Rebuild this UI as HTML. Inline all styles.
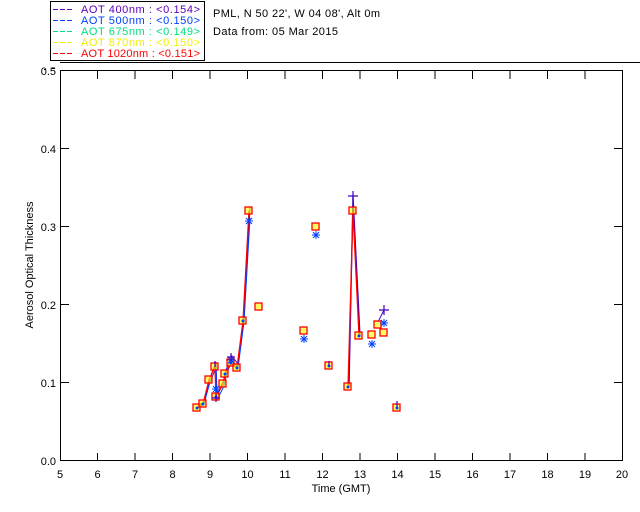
<!DOCTYPE html>
<html><head><meta charset="utf-8"><style>
html,body{margin:0;padding:0;background:#fff;}
svg{display:block;}
text{font-family:"Liberation Sans","DejaVu Sans",sans-serif;font-size:11px;}
</style></head><body>
<svg width="640" height="512" viewBox="0 0 640 512" xmlns="http://www.w3.org/2000/svg">
<rect width="640" height="512" fill="#fff"/>
<!-- legend -->
<rect x="50.5" y="1.5" width="154" height="59" fill="none" stroke="#000"/>
<g stroke-width="1" stroke-dasharray="5,2">
<line x1="53" y1="9.5" x2="73" y2="9.5" stroke="#6000c0"/>
<line x1="53" y1="20.5" x2="73" y2="20.5" stroke="#0040ff"/>
<line x1="53" y1="31.5" x2="73" y2="31.5" stroke="#00e080"/>
<line x1="53" y1="42.5" x2="73" y2="42.5" stroke="#f0f000"/>
<line x1="53" y1="53.5" x2="73" y2="53.5" stroke="#ff0000"/>
</g>
<g font-size="11">
<text x="81" y="13" fill="#6000c0" textLength="119">AOT  400nm : &lt;0.154&gt;</text>
<text x="81" y="24" fill="#0040ff" textLength="119">AOT  500nm : &lt;0.150&gt;</text>
<text x="81" y="35" fill="#00e080" textLength="119">AOT  675nm : &lt;0.149&gt;</text>
<text x="81" y="46" fill="#f0f000" textLength="119">AOT  870nm : &lt;0.150&gt;</text>
<text x="81" y="57" fill="#ff0000" textLength="119">AOT 1020nm : &lt;0.151&gt;</text>
<text x="213" y="17" fill="#000" textLength="167">PML, N 50 22', W 04 08', Alt 0m</text>
<text x="213" y="35" fill="#000" textLength="125">Data from: 05 Mar 2015</text>
</g>
<line x1="60" y1="62.5" x2="640" y2="62.5" stroke="#000"/>
<line x1="44" y1="69.5" x2="46" y2="69.5" stroke="#000"/><line x1="52" y1="68.5" x2="55" y2="68.5" stroke="#000"/>
<!-- axes -->
<rect x="60.5" y="70.5" width="562" height="390" fill="none" stroke="#000"/>
<g stroke="#000">
<line x1="97.5" y1="461" x2="97.5" y2="453"/><line x1="135" y1="461" x2="135" y2="453"/><line x1="172.5" y1="461" x2="172.5" y2="453"/><line x1="210" y1="461" x2="210" y2="453"/><line x1="247.5" y1="461" x2="247.5" y2="453"/><line x1="285" y1="461" x2="285" y2="453"/><line x1="322.5" y1="461" x2="322.5" y2="453"/><line x1="360" y1="461" x2="360" y2="453"/><line x1="397.5" y1="461" x2="397.5" y2="453"/><line x1="435" y1="461" x2="435" y2="453"/><line x1="472.5" y1="461" x2="472.5" y2="453"/><line x1="510" y1="461" x2="510" y2="453"/><line x1="547.5" y1="461" x2="547.5" y2="453"/><line x1="585" y1="461" x2="585" y2="453"/>
<line x1="97.5" y1="71" x2="97.5" y2="79"/><line x1="135" y1="71" x2="135" y2="79"/><line x1="172.5" y1="71" x2="172.5" y2="79"/><line x1="210" y1="71" x2="210" y2="79"/><line x1="247.5" y1="71" x2="247.5" y2="79"/><line x1="285" y1="71" x2="285" y2="79"/><line x1="322.5" y1="71" x2="322.5" y2="79"/><line x1="360" y1="71" x2="360" y2="79"/><line x1="397.5" y1="71" x2="397.5" y2="79"/><line x1="435" y1="71" x2="435" y2="79"/><line x1="472.5" y1="71" x2="472.5" y2="79"/><line x1="510" y1="71" x2="510" y2="79"/><line x1="547.5" y1="71" x2="547.5" y2="79"/><line x1="585" y1="71" x2="585" y2="79"/>
<line x1="61" y1="148.5" x2="69" y2="148.5"/><line x1="61" y1="226.5" x2="69" y2="226.5"/><line x1="61" y1="304.5" x2="69" y2="304.5"/><line x1="61" y1="382.5" x2="69" y2="382.5"/>
<line x1="622" y1="148.5" x2="614" y2="148.5"/><line x1="622" y1="226.5" x2="614" y2="226.5"/><line x1="622" y1="304.5" x2="614" y2="304.5"/><line x1="622" y1="382.5" x2="614" y2="382.5"/>
</g>
<g fill="#000" text-anchor="end">
<text x="56" y="465">0.0</text><text x="56" y="387">0.1</text><text x="56" y="309">0.2</text><text x="56" y="231">0.3</text><text x="56" y="153">0.4</text><text x="56" y="75">0.5</text>
</g>
<g fill="#000" text-anchor="middle">
<text x="60" y="478">5</text><text x="97.5" y="478">6</text><text x="135" y="478">7</text><text x="172.5" y="478">8</text><text x="210" y="478">9</text><text x="247.5" y="478">10</text><text x="285" y="478">11</text><text x="322.5" y="478">12</text><text x="360" y="478">13</text><text x="397.5" y="478">14</text><text x="435" y="478">15</text><text x="472.5" y="478">16</text><text x="510" y="478">17</text><text x="547.5" y="478">18</text><text x="585" y="478">19</text><text x="622" y="478">20</text>
<text x="341" y="492">Time (GMT)</text>
<text transform="translate(33,265) rotate(-90)" font-size="10">Aerosol Optical Thickness</text>
</g>
<!-- lines -->
<polyline fill="none" stroke="#4000c0" stroke-width="1" points="198,406 204,402 210,378 216,362 217,394 224,380 226,370 232,356 238,364 244,320 250,207"/>
<polyline fill="none" stroke="#0040ff" stroke-width="1" points="198,408 204,404 210,382 216,368 217,400 224,386 226,376 232,360 238,368 244,322 250,218"/>
<polyline fill="none" stroke="#ff0000" stroke-width="1.3" points="197,408 203,404 209,380 215,367 216,397 223,384 225,374 231,363 237,368 243,321 249,211"/>
<polyline fill="none" stroke="#4000c0" stroke-width="1.3" points="349,387 353,196 360,336"/>
<polyline fill="none" stroke="#ff0000" stroke-width="1.3" points="348,387 353,211 359,336"/>
<polyline fill="none" stroke="#4000c0" stroke-width="1" points="378,322 384,310"/>
<g stroke="#ff0000" stroke-width="1.3" fill="#ff0" fill-opacity="0.6">
<rect x="193" y="404" width="7" height="7"/><rect x="199" y="400" width="7" height="7"/><rect x="205" y="376" width="7" height="7"/><rect x="211" y="363" width="7" height="7"/><rect x="212" y="393" width="7" height="7"/><rect x="219" y="380" width="7" height="7"/><rect x="221" y="370" width="7" height="7"/><rect x="227" y="359" width="7" height="7"/><rect x="233" y="364" width="7" height="7"/><rect x="239" y="317" width="7" height="7"/><rect x="245" y="207" width="7" height="7"/><rect x="255" y="303" width="7" height="7"/><rect x="300" y="327" width="7" height="7"/><rect x="312" y="223" width="7" height="7"/><rect x="325" y="362" width="7" height="7"/><rect x="344" y="383" width="7" height="7"/><rect x="349" y="207" width="7" height="7"/><rect x="355" y="332" width="7" height="7"/><rect x="368" y="331" width="7" height="7"/><rect x="374" y="321" width="7" height="7"/><rect x="380" y="329" width="7" height="7"/><rect x="393" y="404" width="7" height="7"/>
</g>
<g fill="#0040ff">
<circle cx="197" cy="408" r="1.5"/><circle cx="203" cy="404" r="1.5"/><circle cx="216" cy="397" r="1.5"/><circle cx="225" cy="374" r="1.5"/><circle cx="231" cy="363" r="1.5"/><circle cx="237" cy="368" r="1.5"/><circle cx="243" cy="321" r="1.5"/><circle cx="329" cy="366" r="1.5"/><circle cx="348" cy="387" r="1.5"/><circle cx="359" cy="336" r="1.5"/><circle cx="397" cy="408" r="1.5"/>
</g>
<g stroke="#0040ff" stroke-width="1">
<path d="M249 217v8M245 221h8M246 218l6 6M252 218l-6 6"/>
<path d="M316 231v8M312 235h8M313 232l6 6M319 232l-6 6"/>
<path d="M304 335v8M300 339h8M301 336l6 6M307 336l-6 6"/>
<path d="M372 340v8M368 344h8M369 341l6 6M375 341l-6 6"/>
<path d="M384 319v8M380 323h8M381 320l6 6M387 320l-6 6"/>
<path d="M216 385v8M212 389h8M213 386l6 6M219 386l-6 6"/>
<path d="M231 356v8M227 360h8M228 357l6 6M234 357l-6 6"/>
</g>
<g stroke="#4000c0" stroke-width="1.2">
<path d="M353 191v10M348 196h10"/><path d="M384 305v10M379 310h10"/><path d="M216 394v8M212 398h8"/><path d="M231 353v8M227 357h8"/><path d="M215 361v6M397 401v6M329 361v5"/>
</g>
</svg>
</body></html>
